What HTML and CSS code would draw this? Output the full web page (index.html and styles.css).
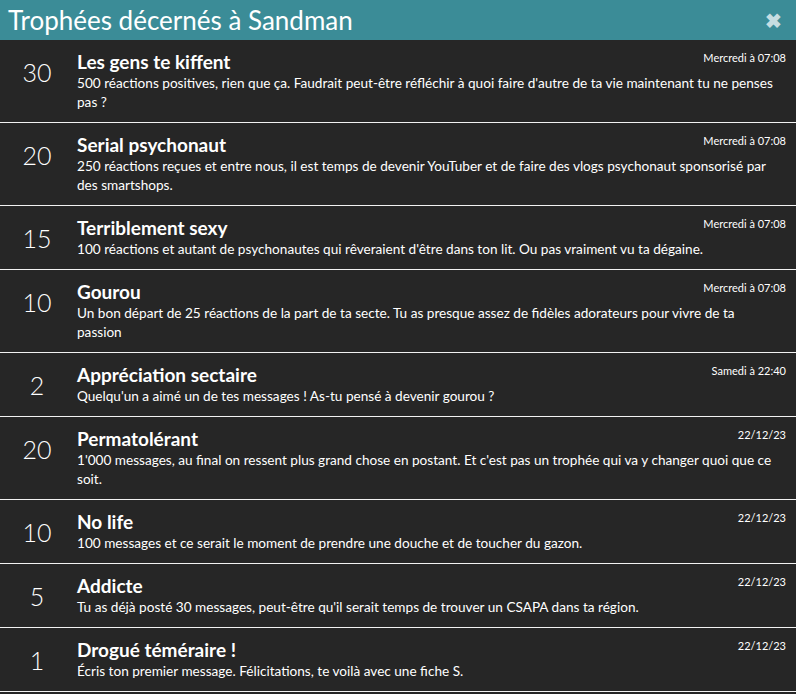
FILE: index.html
```html
<!DOCTYPE html>
<html lang="fr">
<head>
    <meta charset="UTF-8">
    <meta name="viewport" content="width=device-width, initial-scale=1.0">
    <title>Trophées décernés à Sandman</title>
    <link rel="stylesheet" href="styles.css">
</head>
<body>
    <div class="overlay">
        <!-- Header -->
        <div class="overlay-header">
            <h2 class="overlay-title">Trophées décernés à Sandman</h2>
            <span class="overlay-close">&#10006;</span>
        </div>

        <!-- Trophy list -->
        <ul class="trophy-list">
            <li class="trophy">
                <div class="trophy-points">30</div>
                <div class="trophy-main">
                    <div class="trophy-head">
                        <h3>Les gens te kiffent</h3>
                        <span class="trophy-date">Mercredi à 07:08</span>
                    </div>
                    <p>500 réactions positives, rien que ça. Faudrait peut-être réfléchir à quoi faire d'autre de ta vie maintenant tu ne penses pas ?</p>
                </div>
            </li>
            <li class="trophy">
                <div class="trophy-points">20</div>
                <div class="trophy-main">
                    <div class="trophy-head">
                        <h3>Serial psychonaut</h3>
                        <span class="trophy-date">Mercredi à 07:08</span>
                    </div>
                    <p>250 réactions reçues et entre nous, il est temps de devenir YouTuber et de faire des vlogs psychonaut sponsorisé par des smartshops.</p>
                </div>
            </li>
            <li class="trophy">
                <div class="trophy-points">15</div>
                <div class="trophy-main">
                    <div class="trophy-head">
                        <h3>Terriblement sexy</h3>
                        <span class="trophy-date">Mercredi à 07:08</span>
                    </div>
                    <p>100 réactions et autant de psychonautes qui rêveraient d'être dans ton lit. Ou pas vraiment vu ta dégaine.</p>
                </div>
            </li>
            <li class="trophy">
                <div class="trophy-points">10</div>
                <div class="trophy-main">
                    <div class="trophy-head">
                        <h3>Gourou</h3>
                        <span class="trophy-date">Mercredi à 07:08</span>
                    </div>
                    <p>Un bon départ de 25 réactions de la part de ta secte. Tu as presque assez de fidèles adorateurs pour vivre de ta passion</p>
                </div>
            </li>
            <li class="trophy">
                <div class="trophy-points">2</div>
                <div class="trophy-main">
                    <div class="trophy-head">
                        <h3>Appréciation sectaire</h3>
                        <span class="trophy-date">Samedi à 22:40</span>
                    </div>
                    <p>Quelqu'un a aimé un de tes messages ! As-tu pensé à devenir gourou ?</p>
                </div>
            </li>
            <li class="trophy">
                <div class="trophy-points">20</div>
                <div class="trophy-main">
                    <div class="trophy-head">
                        <h3>Permatolérant</h3>
                        <span class="trophy-date">22/12/23</span>
                    </div>
                    <p>1'000 messages, au final on ressent plus grand chose en postant. Et c'est pas un trophée qui va y changer quoi que ce soit.</p>
                </div>
            </li>
            <li class="trophy">
                <div class="trophy-points">10</div>
                <div class="trophy-main">
                    <div class="trophy-head">
                        <h3>No life</h3>
                        <span class="trophy-date">22/12/23</span>
                    </div>
                    <p>100 messages et ce serait le moment de prendre une douche et de toucher du gazon.</p>
                </div>
            </li>
            <li class="trophy">
                <div class="trophy-points">5</div>
                <div class="trophy-main">
                    <div class="trophy-head">
                        <h3>Addicte</h3>
                        <span class="trophy-date">22/12/23</span>
                    </div>
                    <p>Tu as déjà posté 30 messages, peut-être qu'il serait temps de trouver un CSAPA dans ta région.</p>
                </div>
            </li>
            <li class="trophy">
                <div class="trophy-points">1</div>
                <div class="trophy-main">
                    <div class="trophy-head">
                        <h3>Drogué téméraire !</h3>
                        <span class="trophy-date">22/12/23</span>
                    </div>
                    <p>Écris ton premier message. Félicitations, te voilà avec une fiche S.</p>
                </div>
            </li>
        </ul>
    </div>
</body>
</html>
```

FILE: styles.css
```css
body {
    margin: 0;
    padding: 0;
    background-color: #262626;
    font-family: "Lato", "Liberation Sans", sans-serif;
    color: #ffffff;
}
.overlay {
    width: 796px;
}
.overlay-header {
    display: flex;
    align-items: center;
    justify-content: space-between;
    height: 40px;
    padding: 0 14px 0 8px;
    background-color: #3b8c97;
}
.overlay-title {
    margin: 0;
    font-size: 26px;
    font-weight: 400;
    color: #ffffff;
}
.overlay-close {
    font-size: 20px;
    font-weight: 700;
    color: #c6dde1;
    cursor: pointer;
}
.trophy-list {
    list-style: none;
    margin: 0;
    padding: 0;
}
.trophy {
    display: flex;
    align-items: flex-start;
    padding: 10px 10px 10px 0;
    border-bottom: 1px solid #f2f2f2;
}
.trophy-points {
    flex: 0 0 74px;
    text-align: center;
    font-size: 25px;
    font-weight: 300;
    line-height: 42px;
    padding-top: 1px;
}
.trophy-main {
    flex-grow: 1;
    margin-left: 3px;
}
.trophy-head {
    display: flex;
    justify-content: space-between;
    align-items: flex-start;
}
.trophy-head h3 {
    margin: 0;
    font-size: 19px;
    font-weight: 700;
    line-height: 24px;
}
.trophy-date {
    font-size: 11px;
    line-height: 14px;
    padding-top: 1px;
}
.trophy-main p {
    margin: 0;
    padding-right: 6px;
    font-size: 13.6px;
    line-height: 19px;
}
```
